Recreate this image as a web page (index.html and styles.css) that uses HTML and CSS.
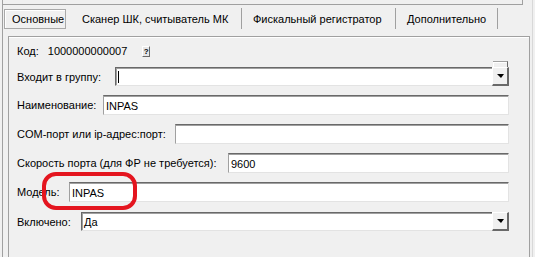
FILE: index.html
```html
<!DOCTYPE html>
<html lang="ru">
<head>
    <meta charset="UTF-8">
    <title>Основные</title>
    <link rel="stylesheet" href="styles.css">
</head>
<body>
<section class="frame">
    <div class="topbar"></div>
    <div class="tabs">
        <a href="javascript:;" class="tab active">Основные</a>
        <a href="javascript:;" class="tab t2">Сканер ШК, считыватель МК</a>
        <a href="javascript:;" class="tab t3">Фискальный регистратор</a>
        <a href="javascript:;" class="tab t4">Дополнительно</a>
    </div>
    <div class="panel">
        <div class="row code">
            <span class="label">Код:</span>
            <span class="code-val">1000000000007</span>
            <span class="help">?</span>
        </div>
        <div class="row first">
            <span class="label w-group">Входит в группу:</span>
            <div class="combo">
                <span class="stub"></span>
                <div class="combo-text"><i class="caret"></i></div>
                <span class="combo-btn"></span>
            </div>
        </div>
        <div class="row">
            <span class="label w-name">Наименование:</span>
            <div class="field">INPAS</div>
        </div>
        <div class="row">
            <span class="label w-com">COM-порт или ip-адрес:порт:</span>
            <div class="field"></div>
        </div>
        <div class="row">
            <span class="label w-speed">Скорость порта (для ФР не требуется):</span>
            <div class="field">9600</div>
        </div>
        <div class="row model">
            <span class="label w-model">Модель:</span>
            <div class="field">INPAS</div>
            <span class="mark"></span>
        </div>
        <div class="row last">
            <span class="label w-on">Включено:</span>
            <div class="combo">
                <div class="combo-text">Да</div>
                <span class="combo-btn"></span>
            </div>
        </div>
    </div>
</section>
</body>
</html>
```

FILE: styles.css
```css
html,body{ height:100%; }
body{
    margin:0;
    background:#f0f0f0;
    font:11px "Liberation Sans", Arial, sans-serif;
    color:#000;
    overflow:hidden;
}
.frame{
    margin-left:2px;
    width:531px;
    height:257px;
    box-sizing:border-box;
    border-left:1px solid #a0a0a0;
    border-right:1px solid #d8d8d8;
}
.topbar{
    width:519px;
    height:4px;
    border-bottom:1px solid #a0a0a0;
    border-right:1px solid #a0a0a0;
}

/* tabs */
.tabs{
    display:flex;
    align-items:flex-end;
    height:24px;
    margin-top:0;
}
.tab{
    display:flex;
    align-items:center;
    height:21px;
    box-sizing:border-box;
    color:#000;
    text-decoration:none;
    border-right:1px solid #a0a0a0;
}
.tab.active{
    margin-left:1px;
    height:20px;
    width:62px;
    padding-left:7px;
    border:1px solid #a9a9a9;
    box-shadow:inset 1px 1px #fff;
    margin-bottom:0;
}
.tab.t2{ width:176px; padding-left:16px; }
.tab.t3{ width:154px; padding-left:11px; }
.tab.t4{ width:102px; padding-left:11px; }

/* panel */
.panel{
    position:relative;
    margin:7px 2px 0 5px;
    height:221px;
    box-sizing:border-box;
    border:1px solid #a0a0a0;
    border-bottom:none;
    box-shadow:inset 0 1px #fff;
    padding:5px 20px 0 8px;
}
.row{
    display:flex;
    align-items:center;
    height:20px;
    margin-top:9px;
    position:relative;
}
.row.code{ height:18px; margin-top:0; }
.row.first{ height:19px; margin-top:7px; }
.row.last{ height:19px; margin-top:10px; }
.label{ flex:none; white-space:nowrap; }
.w-group{ width:98px; }
.w-name{ width:86px; }
.w-com{ width:158px; }
.w-speed{ width:211px; }
.w-model{ width:52px; }
.w-on{ width:64px; }

.code-val{ margin-left:9px; }
.help{
    margin-left:15px;
    width:6px;
    height:9px;
    border:1px solid #fff;
    border-right-color:#696969;
    border-bottom-color:#696969;
    background:#e6e6e6;
    font-size:8px;
    font-weight:bold;
    line-height:9px;
    text-align:center;
}

/* inputs */
.field{
    flex:1;
    height:20px;
    box-sizing:border-box;
    background:#fff;
    border:1px solid #e3e3e3;
    border-top:1px solid #696969;
    border-left-color:#a0a0a0;
    box-shadow:inset 0 1px #a0a0a0;
    padding:2px 0 0 2px;
    line-height:16px;
}
.combo{
    flex:1;
    display:flex;
    height:19px;
    position:relative;
}
.combo-text{
    flex:1;
    box-sizing:border-box;
    background:#fff;
    border-top:1px solid #696969;
    border-left:1px solid #696969;
    border-bottom:1px solid #e3e3e3;
    box-shadow:inset 1px 1px #a0a0a0;
    padding:2px 0 0 2px;
    line-height:15px;
}
.caret{
    display:block;
    width:1px;
    height:12px;
    margin-top:1px;
    background:#000;
}
.combo-btn{
    width:17px;
    box-sizing:border-box;
    background:#f0f0f0;
    border:1px solid #fff;
    border-right:2px solid #696969;
    border-bottom:2px solid #696969;
    display:flex;
    align-items:center;
    justify-content:center;
}
.combo-btn:after{
    content:"";
    border-top:4px solid #000;
    border-left:4px solid transparent;
    border-right:3px solid transparent;
}
.stub{
    position:absolute;
    right:1px;
    top:-6px;
    width:15px;
    height:6px;
    box-sizing:border-box;
    background:#f0f0f0;
    border-top:1px solid #a0a0a0;
    border-right:1px solid #696969;
    box-shadow:inset 1px 1px #fff;
}

/* red highlight */
.mark{
    position:absolute;
    left:25px;
    top:-10px;
    width:95px;
    height:38px;
    box-sizing:border-box;
    border:4px solid #e4151f;
    border-radius:14px;
}
```
